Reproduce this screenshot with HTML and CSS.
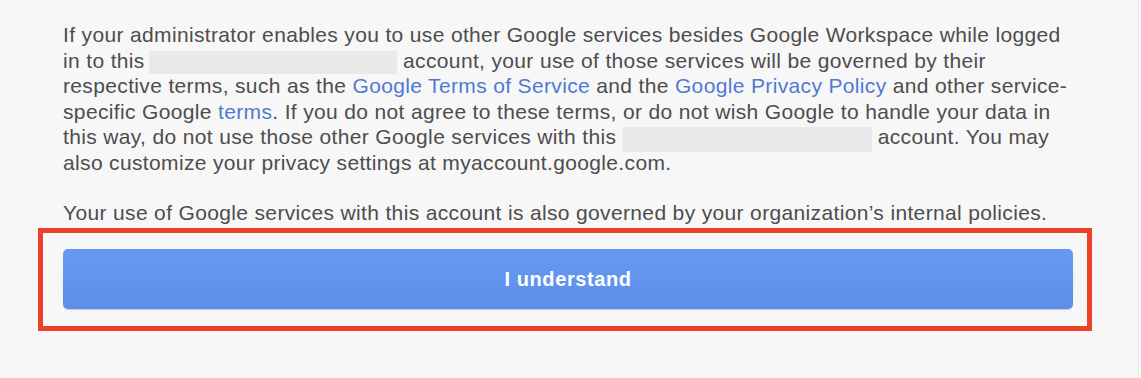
FILE: index.html
```html
<!DOCTYPE html>
<html lang="en">
<head>
<meta charset="utf-8">
<title>Terms notice</title>
<link rel="stylesheet" href="styles.css">
</head>
<body>
<div class="frame">
  <main class="page">
    <div class="terms">
      <p class="para">If your administrator enables you to use other Google services besides Google Workspace while logged<br>in to this <span class="redact redact-a"></span> account, your use of those services will be governed by their<br>respective terms, such as the <a class="link" href="#">Google Terms of Service</a> and the <a class="link" href="#">Google Privacy Policy</a> and other service-<br>specific Google <a class="link" href="#">terms</a>. If you do not agree to these terms, or do not wish Google to handle your data in<br>this way, do not use those other Google services with this <span class="redact redact-b"></span> account. You may<br>also customize your privacy settings at myaccount.google.com.</p>
      <p class="para">Your use of Google services with this account is also governed by your organization’s internal policies.</p>
    </div>
    <div class="highlight">
      <button class="btn" type="button">I understand</button>
    </div>
  </main>
  <div class="gutter"></div>
</div>
</body>
</html>
```

FILE: styles.css
```css
html, body {
  margin: 0;
  padding: 0;
}

body {
  background: #f7f7f7;
  font-family: "Liberation Sans", Arial, sans-serif;
  width: 1141px;
  height: 378px;
  overflow: hidden;
}

.frame {
  display: flex;
  height: 378px;
}

.page {
  flex: 1;
  padding: 22px 0 0 38px;
}

.gutter {
  width: 2px;
  border-left: 1px solid #ebebeb;
  background: #f9f9f9;
}

.terms {
  padding-left: 25px;
}

.para {
  margin: 0 0 24px 0;
  font-size: 21px;
  line-height: 25.6px;
  letter-spacing: 0.35px;
  color: #4d4d4d;
  white-space: nowrap;
}

.para:last-child {
  margin-bottom: 0;
}

.link {
  color: #5079d2;
  text-decoration: none;
}

.redact {
  display: inline-block;
  background: #e9e9e9;
  margin-bottom: -4px;
}

.redact-a {
  width: 248px;
  height: 23px;
  vertical-align: -2px;
  margin-left: -2px;
}

.redact-b {
  width: 249px;
  height: 25px;
  vertical-align: -4px;
}

.highlight {
  margin-top: 3px;
  width: 1054px;
  box-sizing: border-box;
  border: 5px solid #ea4128;
  padding: 16px 14px 17px 20px;
}

.btn {
  display: block;
  width: 100%;
  height: 60px;
  border: none;
  border-radius: 5px;
  background: linear-gradient(180deg, #6699f1 0%, #5d8fe9 100%);
  box-shadow: 0 1px 1px rgba(40, 70, 140, 0.25);
  color: #ffffff;
  font-family: "Liberation Sans", Arial, sans-serif;
  font-size: 20px;
  font-weight: bold;
  letter-spacing: 0.6px;
  padding: 0;
  cursor: pointer;
}
```
